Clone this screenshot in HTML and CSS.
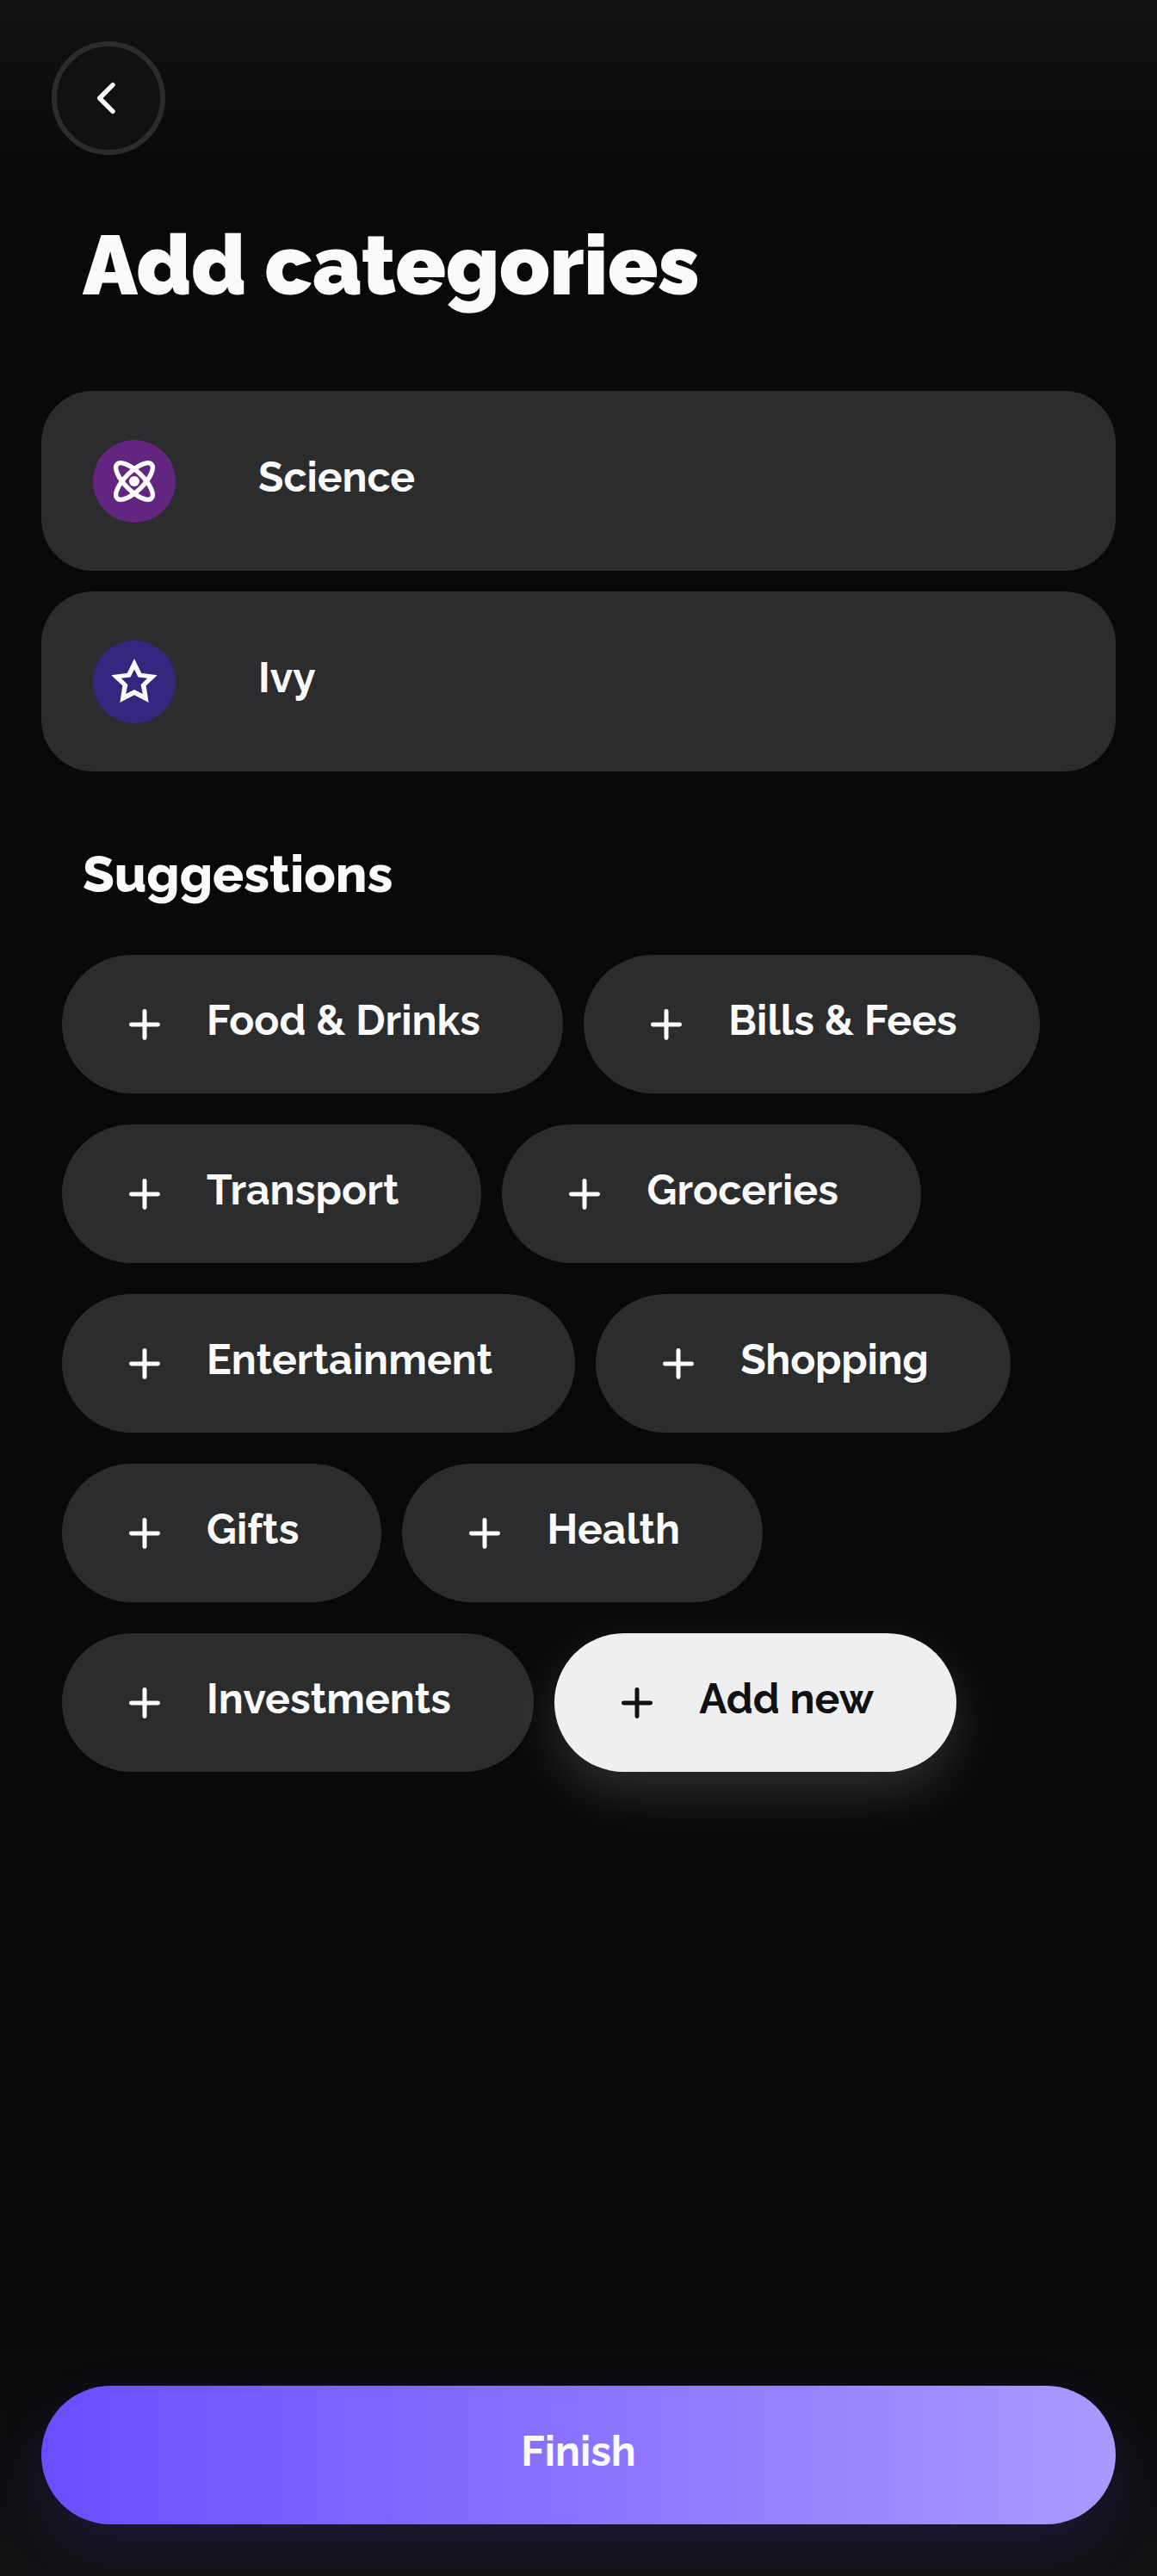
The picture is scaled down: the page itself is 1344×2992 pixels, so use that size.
FILE: index.html
```html
<!DOCTYPE html>
<html lang="en">
<head>
<meta charset="utf-8">
<title>Add categories</title>
<link rel="stylesheet" href="styles.css">
</head>
<body>
<svg class="defs" aria-hidden="true">
  <symbol id="plus" viewBox="0 0 24 24"><path d="M12 6.83v10.34M6.83 12h10.34" fill="none" stroke="currentColor" stroke-width="1.66" stroke-linecap="round"/></symbol>
</svg>
<main class="screen">
  <button class="back" aria-label="Back">
    <svg viewBox="0 0 72 72"><path d="M41 20.7 25.7 36 41 51.3" fill="none" stroke="currentColor" stroke-width="5.4" stroke-linecap="round" stroke-linejoin="round"/></svg>
  </button>
  <h1 class="title">Add categories</h1>

  <ul class="categories">
    <li class="category">
      <span class="badge badge-science">
        <svg viewBox="-48 -48 96 96"><g fill="none" stroke="currentColor" stroke-width="5.4"><ellipse rx="28.2" ry="10.8" transform="rotate(45)"/><ellipse rx="28.2" ry="10.8" transform="rotate(-45)"/></g><circle r="6.1" fill="currentColor"/></svg>
      </span>
      <span class="name">Science</span>
    </li>
    <li class="category">
      <span class="badge badge-ivy">
        <svg viewBox="-48 -48 96 96"><path fill="currentColor" fill-rule="evenodd" d="M0-27 8.2-10.2 26.7-7.7 13.6 4.6 16.7 24 0 15.2-16.7 24-13.6 4.6-26.7-7.7-8.2-10.2ZM0-14.6-4.5-5.6-15.2-4.3-7.6 3.3-9.8 14 0 9 9.8 14 7.6 3.3 15.2-4.3 4.5-5.6Z"/></svg>
      </span>
      <span class="name">Ivy</span>
    </li>
  </ul>

  <h2 class="subtitle">Suggestions</h2>
  <div class="suggestions">
    <div class="chips">
      <button class="chip"><svg><use href="#plus"/></svg><span class="label">Food &amp; Drinks</span></button>
      <button class="chip loose"><svg><use href="#plus"/></svg><span class="label">Bills &amp; Fees</span></button>
    </div>
    <div class="chips">
      <button class="chip"><svg><use href="#plus"/></svg><span class="label">Transport</span></button>
      <button class="chip loose"><svg><use href="#plus"/></svg><span class="label">Groceries</span></button>
    </div>
    <div class="chips">
      <button class="chip"><svg><use href="#plus"/></svg><span class="label">Entertainment</span></button>
      <button class="chip tight"><svg><use href="#plus"/></svg><span class="label">Shopping</span></button>
    </div>
    <div class="chips">
      <button class="chip"><svg><use href="#plus"/></svg><span class="label">Gifts</span></button>
      <button class="chip"><svg><use href="#plus"/></svg><span class="label">Health</span></button>
    </div>
    <div class="chips">
      <button class="chip"><svg><use href="#plus"/></svg><span class="label">Investments</span></button>
      <button class="chip chip-new"><svg><use href="#plus"/></svg><span class="label">Add new</span></button>
    </div>
  </div>

  <button class="finish"><span class="label">Finish</span></button>
</main>
</body>
</html>
```

FILE: styles.css
```css
* {
  box-sizing: border-box;
  margin: 0;
  padding: 0;
}

body {
  background: #090909;
  color: #fafafa;
  font-family: Raleway, Lato, sans-serif;
}

button {
  border: 0;
  color: inherit;
  font: inherit;
}

.defs {
  display: none;
}

.screen {
  display: flex;
  flex-direction: column;
  width: 1344px;
  height: 2992px;
  padding: 48px 48px 60px;
  overflow: hidden;
  background:
    linear-gradient(#121215, #09090900) top / 100% 200px no-repeat,
    linear-gradient(#09090900, #121215) bottom / 100% 300px no-repeat,
    #090909;
}

.back {
  display: flex;
  flex: none;
  align-items: center;
  justify-content: center;
  width: 132px;
  height: 132px;
  margin-left: 12px;
  border: 6px solid #2b2c2d;
  border-radius: 50%;
  background: #111114;
}

.back svg {
  width: 72px;
  height: 72px;
}

.title {
  margin: 72px 0 0 48px;
  font-size: 96px;
  font-weight: 900;
  line-height: 112px;
  letter-spacing: -0.1px;
}

.categories {
  display: flex;
  flex-direction: column;
  gap: 24px;
  margin-top: 90px;
  list-style: none;
}

.category {
  display: flex;
  align-items: center;
  height: 209px;
  padding: 0 60px;
  border-radius: 60px;
  background: #2b2c2d;
}

.badge {
  width: 96px;
  height: 96px;
  margin-right: 96px;
  border-radius: 50%;
}

.badge svg {
  display: block;
  width: 96px;
  height: 96px;
}

.badge-science {
  background: #622680;
}

.badge-ivy {
  background: #352680;
}

.name,
.label {
  margin-bottom: 9px;
  font-size: 48px;
  font-weight: 700;
  line-height: 56px;
  white-space: nowrap;
}

.subtitle {
  margin: 84px 0 0 48px;
  font-size: 60px;
  font-weight: 800;
  line-height: 70px;
}

.suggestions {
  display: flex;
  flex-direction: column;
  gap: 36px;
  margin: 59px 0 0 24px;
}

.chips {
  display: flex;
  gap: 24px;
}

.chip {
  display: flex;
  align-items: center;
  gap: 36px;
  height: 161px;
  padding: 0 96px 0 60px;
  border-radius: 81px;
  background: #2b2c2d;
  letter-spacing: 0.1px;
}

.chip.loose {
  letter-spacing: 0.19px;
}

.chip.tight {
  letter-spacing: -0.23px;
}

.chip svg {
  width: 72px;
  height: 72px;
}

.chip-new {
  background: #efeff1;
  color: #111114;
  box-shadow: 0 24px 60px rgba(239, 239, 255, 0.16);
}

.finish {
  display: flex;
  align-items: center;
  justify-content: center;
  height: 161px;
  margin-top: auto;
  border-radius: 81px;
  background: linear-gradient(90deg, #6b4dff, #aa99ff);
  box-shadow: 0 24px 60px rgba(107, 77, 255, 0.15);
}
```
